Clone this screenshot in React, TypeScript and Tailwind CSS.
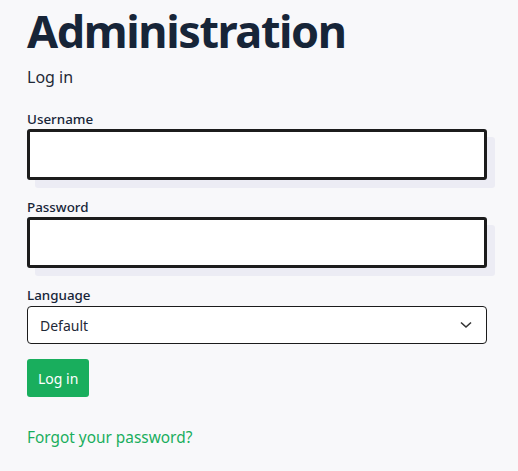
import React from 'react';

const inputCls =
  'block w-full h-[51px] bg-white border-[3px] border-[#1c1c1c] rounded-[3px] shadow-[8px_8px_0_0_#ececf4] outline-none px-3';

const labelCls = 'block text-[13.4px] font-medium leading-[18px]';

const App: React.FC = () => {
  return (
    <div className="min-h-[471px] bg-[#f8f8fa] px-[27px] pr-[31px] text-[#172538]" style={{ fontFamily: '"Noto Sans", sans-serif' }}>
      <h1 className="text-[45px] font-bold leading-none pt-[8px] tracking-[-1.4px]">Administration</h1>
      <p className="mt-[14px] text-[16px] leading-[20px] text-[#1f2937]">Log in</p>

      <form className="mt-[23px]" onSubmit={(e) => e.preventDefault()}>
        <label className={labelCls + ' mb-[1px]'}>Username</label>
        <input type="text" className={inputCls} />

        <label className={labelCls + ' mt-[18px] mb-[1px]'}>Password</label>
        <input type="password" className={inputCls} />

        <label className={labelCls + ' mt-[18px] mb-[2px]'}>Language</label>
        <div className="relative h-[38px] bg-white border border-[#1c1c1c] rounded-[4px] flex items-center pl-[12px] text-[14px] text-[#1f2937]">
          <span>Default</span>
          <svg className="absolute right-[14px] top-[14px]" width="12" height="8" viewBox="0 0 12 8" fill="none">
            <path d="M1 1.5 6 6l5-4.5" stroke="#333" strokeWidth="1.6" />
          </svg>
        </div>

        <button type="submit" className="mt-[15px] h-[38px] px-[11px] bg-[#19ae5d] text-white text-[14px] rounded-[3px]">
          Log in
        </button>
      </form>

      <a href="#" className="block mt-[31px] text-[15.4px] text-[#19ae5d] leading-[20px]">Forgot your password?</a>
    </div>
  );
};

export default App;
